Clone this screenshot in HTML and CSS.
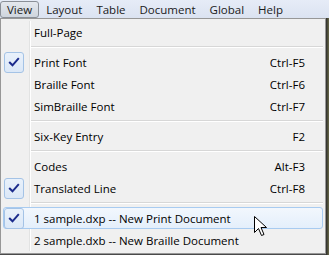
FILE: index.html
```html
<!DOCTYPE html>
<html>
<head>
<meta charset="utf-8">
<link rel="stylesheet" href="styles.css">
</head>
<body>
<div class="screen">
  <div class="menubar">
    <span class="mb-item active">View</span>
    <span class="mb-item">Layout</span>
    <span class="mb-item">Table</span>
    <span class="mb-item">Document</span>
    <span class="mb-item">Global</span>
    <span class="mb-item">Help</span>
  </div>
  <div class="dropdown-wrap">
    <div class="dropdown">
      <div class="gutter-line"></div>
      <div class="item"><span class="icon"></span><span class="label">Full-Page</span><span class="key"></span></div>
      <div class="sep"></div>
      <div class="item"><span class="icon"><span class="check"><svg width="12" height="10" viewBox="0 0 12 10"><path d="M1.2 5 L4.5 8.3 L10.8 1.2" fill="none" stroke="#1b2b8c" stroke-width="2"/></svg></span></span><span class="label">Print Font</span><span class="key">Ctrl-F5</span></div>
      <div class="item"><span class="icon"></span><span class="label">Braille Font</span><span class="key">Ctrl-F6</span></div>
      <div class="item"><span class="icon"></span><span class="label">SimBraille Font</span><span class="key">Ctrl-F7</span></div>
      <div class="sep"></div>
      <div class="item"><span class="icon"></span><span class="label">Six-Key Entry</span><span class="key">F2</span></div>
      <div class="sep"></div>
      <div class="item"><span class="icon"></span><span class="label">Codes</span><span class="key">Alt-F3</span></div>
      <div class="item"><span class="icon"><span class="check"><svg width="12" height="10" viewBox="0 0 12 10"><path d="M1.2 5 L4.5 8.3 L10.8 1.2" fill="none" stroke="#1b2b8c" stroke-width="2"/></svg></span></span><span class="label">Translated Line</span><span class="key">Ctrl-F8</span></div>
      <div class="sep"></div>
      <div class="item hover"><span class="icon"><span class="check"><svg width="12" height="10" viewBox="0 0 12 10"><path d="M1.2 5 L4.5 8.3 L10.8 1.2" fill="none" stroke="#1b2b8c" stroke-width="2"/></svg></span></span><span class="label">1 sample.dxp -- New Print Document</span><span class="key"></span>
        <svg class="cursor" width="13" height="21" viewBox="0 0 13 21"><path d="M0.5 0.5 L0.5 16.5 L4.5 12.5 L7.5 19.5 L10 18.5 L7 11.5 L12.5 11.5 Z" fill="#fff" stroke="#000" stroke-width="1"/></svg>
      </div>
      <div class="item"><span class="icon"></span><span class="label">2 sample.dxb -- New Braille Document</span><span class="key"></span></div>
    </div>
    <div class="edge"></div>
  </div>
</div>
</body>
</html>
```

FILE: styles.css
```css
html, body {
  margin: 0;
  padding: 0;
}
body {
  width: 329px;
  height: 255px;
  overflow: hidden;
  background: #4a4a4a;
  font-family: "Open Sans", "Noto Sans", sans-serif;
  font-size: 11.5px;
  color: #000;
}
.screen {
  width: 329px;
  height: 255px;
  display: flex;
  flex-direction: column;
}
.menubar {
  height: 18px;
  flex: none;
  display: flex;
  align-items: stretch;
  background: linear-gradient(#e6ecf7, #dbe3f1);
}
.mb-item {
  display: flex;
  align-items: center;
  padding: 0 6px;
  border: 1px solid transparent;
  border-radius: 3px;
  color: #1a1a1a;
}
.mb-item.active {
  border-color: #8a8f97;
  background: linear-gradient(#e4e8ee, #cfd5dd);
  margin-top: 1px;
}
.dropdown-wrap {
  flex: 1;
  display: flex;
  align-items: flex-start;
}
.dropdown {
  position: relative;
  width: 320px;
  background: #f0f0f0;
  border: 1px solid #979797;
  padding: 2px;
  display: flex;
  flex-direction: column;
}
.edge {
  width: 3px;
  align-self: stretch;
  background: linear-gradient(90deg, #2b2b2b, #6b6b4a);
}
.gutter-line {
  position: absolute;
  left: 28px;
  top: 2px;
  bottom: 2px;
  width: 1px;
  background: #e2e3e3;
  box-shadow: 1px 0 0 #fff;
}
.item {
  position: relative;
  height: 22px;
  flex: none;
  display: flex;
  align-items: center;
  border: 1px solid transparent;
  border-radius: 3px;
  box-sizing: border-box;
}
.item.hover {
  border-color: #a8cbf0;
  background: linear-gradient(#f2f7fd, #e4effb);
}
.icon {
  width: 23px;
  flex: none;
  display: flex;
  justify-content: flex-start;
  align-items: center;
}
.check {
  width: 20px;
  height: 21px;
  box-sizing: border-box;
  border: 1px solid #a4c3e6;
  border-radius: 3px;
  background: linear-gradient(#e9f1fb, #dbe8f7);
  display: flex;
  align-items: center;
  justify-content: center;
}
.label {
  flex: 1;
  padding-left: 7px;
  white-space: nowrap;
}
.key {
  padding-right: 17px;
  white-space: nowrap;
}
.sep {
  height: 8px;
  flex: none;
  margin-left: 28px;
  position: relative;
}
.sep::before {
  content: "";
  position: absolute;
  left: 0;
  right: 0;
  top: 3px;
  height: 1px;
  background: #d7d7d7;
  box-shadow: 0 1px 0 #fff;
}
.cursor {
  position: absolute;
  left: 250px;
  top: 8px;
}
```
